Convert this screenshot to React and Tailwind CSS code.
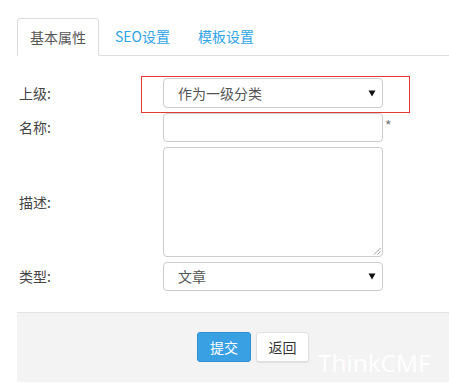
import React from "react";

const font = { fontFamily: '"Noto Sans CJK SC", "Liberation Sans", sans-serif' };

function Arrow() {
  return (
    <svg width="8" height="7" viewBox="0 0 8 7" className="shrink-0">
      <polygon points="0.5,0.5 7.5,0.5 4,6.5" fill="#111" />
    </svg>
  );
}

function Row({ label, children, h }) {
  return (
    <div className="flex">
      <div className="w-[146px] pl-[2px] text-[14px] text-[#444] flex items-center" style={{ height: h }}>
        {label}
      </div>
      <div className="relative">{children}</div>
    </div>
  );
}

export default function App() {
  return (
    <div className="w-[449px] h-[390px] bg-white overflow-hidden relative" style={font}>
      <div className="pl-[17px] pt-[18px]">
        {/* Tabs */}
        <div className="flex h-[38px] border-b border-[#ddd]">
          <div className="h-[38px] px-[12px] border border-[#ddd] border-b-white rounded-t-[4px] bg-white flex items-center text-[14px] text-[#555] -mb-px">
            基本属性
          </div>
          <div className="h-[37px] px-[16px] flex items-center text-[14px] text-[#2fa4e7]">SEO设置</div>
          <div className="h-[37px] px-[12px] flex items-center text-[14px] text-[#2fa4e7]">模板设置</div>
        </div>

        {/* Form */}
        <div className="mt-[22px] flex flex-col gap-[5px] relative">
          <div className="absolute left-[124px] top-[-2px] w-[269px] h-[37px] border border-[#e53935] pointer-events-none" />
          <Row label="上级:" h="30px">
            <div className="w-[220px] h-[30px] border border-[#ccc] rounded-[4px] flex items-center justify-between pl-[14px] pr-[6px] text-[14px] text-[#555]">
              <span>作为一级分类</span>
              <Arrow />
            </div>
          </Row>
          <Row label="名称:" h="29px">
            <div className="flex">
              <div className="w-[220px] h-[29px] border border-[#ccc] rounded-[4px]" />
              <span className="ml-[2px] mt-[2px] text-[14px] text-[#777] leading-[20px]">*</span>
            </div>
          </Row>
          <Row label="描述:" h="110px">
            <div className="w-[220px] h-[110px] border border-[#ccc] rounded-[4px] relative">
              <svg width="8" height="8" viewBox="0 0 8 8" className="absolute right-[1px] bottom-[1px]">
                <line x1="1" y1="7.5" x2="7.5" y2="1" stroke="#888" strokeWidth="0.8" />
                <line x1="4.5" y1="7.5" x2="7.5" y2="4.5" stroke="#888" strokeWidth="0.8" />
              </svg>
            </div>
          </Row>
          <Row label="类型:" h="29px">
            <div className="w-[220px] h-[29px] border border-[#ccc] rounded-[4px] flex items-center justify-between pl-[14px] pr-[6px] text-[14px] text-[#555]">
              <span>文章</span>
              <Arrow />
            </div>
          </Row>
        </div>

        {/* Footer */}
        <div className="mt-[21px] h-[70px] bg-[#f3f3f3] border-t border-[#e3e3e3] relative">
          <div className="flex gap-[5px] pl-[180px] pt-[19px]">
            <div className="w-[54px] h-[30px] rounded-[3px] bg-[#3aa0e4] border border-[#2f8fd1] text-white text-[14px] flex items-center justify-center">
              提交
            </div>
            <div className="w-[53px] h-[30px] rounded-[3px] bg-white border border-[#e0e0e0] shadow-[0_1px_1px_rgba(0,0,0,0.08)] text-[#333] text-[14px] flex items-center justify-center">
              返回
            </div>
          </div>
          <div
            className="absolute left-[301px] top-[35px] text-[24.5px] leading-[30px] text-white"
            style={{ fontFamily: '"Open Sans", "Noto Sans", sans-serif' }}
          >
            ThinkCMF
          </div>
        </div>
      </div>
    </div>
  );
}
